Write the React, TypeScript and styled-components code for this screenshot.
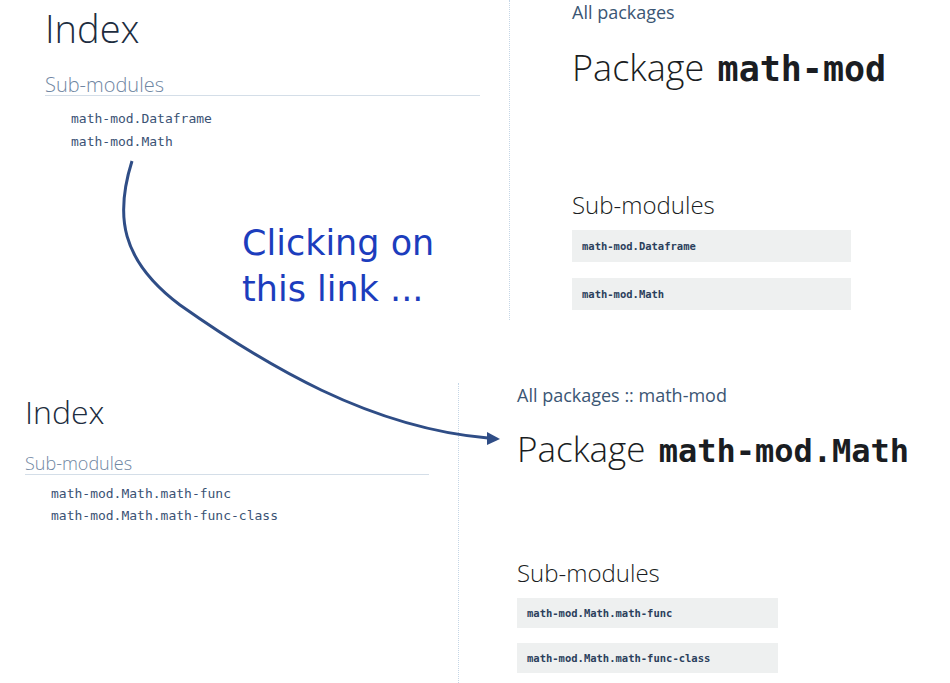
import styled, { createGlobalStyle } from "styled-components";

const GlobalStyle = createGlobalStyle`
  html, body {
    margin: 0;
    padding: 0;
    background: #ffffff;
  }
  body {
    font-family: "Open Sans", "Noto Sans", sans-serif;
  }
`;

const topShot = {
  sideWidth: 510,
  sidePad: 45,
  mainPad: 62,
  height: 320,
  subs: ["math-mod.Dataframe", "math-mod.Math"],
  crumbs: "All packages",
  pkg: "math-mod",
};

const bottomShot = {
  sideWidth: 459,
  sidePad: 25,
  mainPad: 58,
  height: 300,
  subs: ["math-mod.Math.math-func", "math-mod.Math.math-func-class"],
  crumbs: "All packages :: math-mod",
  pkg: "math-mod.Math",
};

const Page = styled.div`
  position: relative;
  width: 950px;
  height: 683px;
  overflow: hidden;
  background: #fff;
`;

const Shot = styled.div<{ $side: number; $h: number; $top: number }>`
  display: grid;
  grid-template-columns: ${(p) => p.$side}px 1fr;
  height: ${(p) => p.$h}px;
  margin-top: ${(p) => p.$top}px;
`;

const Sidebar = styled.nav<{ $pad: number; $small?: boolean }>`
  padding: ${(p) => (p.$small ? 10 : 6)}px 29px 0 ${(p) => p.$pad}px;
  border-right: 1px dotted #c5d6e6;
`;

const IndexTitle = styled.h1<{ $small?: boolean }>`
  margin: 0;
  font-weight: 300;
  font-size: ${(p) => (p.$small ? 32 : 38)}px;
  line-height: 1.2;
  color: #1d2d40;
`;

const SideHeading = styled.h2<{ $small?: boolean }>`
  margin: ${(p) => (p.$small ? 21 : 23)}px 0 0;
  font-weight: 300;
  font-size: ${(p) => (p.$small ? 18 : 20)}px;
  line-height: ${(p) => (p.$small ? 22 : 20)}px;
  color: #6f86a2;
  border-bottom: 1px solid #d4dee8;
  padding-bottom: 0;
`;

const SideList = styled.ul<{ $small?: boolean }>`
  list-style: none;
  margin: ${(p) => (p.$small ? 8 : 11)}px 0 0;
  padding: 0 0 0 26px;
`;

const SideLink = styled.li<{ $small?: boolean }>`
  font-family: "DejaVu Sans Mono", "Liberation Mono", monospace;
  font-size: 13px;
  line-height: ${(p) => (p.$small ? 22 : 23)}px;
  color: #3a5274;
`;

const Main = styled.main<{ $pad: number }>`
  padding-left: ${(p) => p.$pad}px;
`;

const Crumbs = styled.div`
  font-size: 18px;
  line-height: 24px;
  color: #3b5674;
`;

const PkgTitle = styled.h1<{ $small?: boolean }>`
  margin: ${(p) => (p.$small ? 20 : 22)}px 0 0;
  font-weight: 300;
  font-size: ${(p) => (p.$small ? 35 : 36)}px;
  line-height: 44px;
  color: #1a1d22;
  white-space: nowrap;
`;

const PkgName = styled.code<{ $small?: boolean }>`
  font-family: "DejaVu Sans Mono", "Liberation Mono", monospace;
  font-weight: 700;
  font-size: ${(p) => (p.$small ? 32 : 35)}px;
  margin-left: 4px;
`;

const MainHeading = styled.h2<{ $small?: boolean }>`
  margin: ${(p) => (p.$small ? 85 : 99)}px 0 0;
  font-weight: 300;
  font-size: 24px;
  line-height: 30px;
  color: #1a1d22;
`;

const ModList = styled.div<{ $small?: boolean }>`
  display: flex;
  flex-direction: column;
  gap: ${(p) => (p.$small ? 15 : 16)}px;
  margin-top: 10px;
`;

const ModBox = styled.div<{ $small?: boolean }>`
  width: ${(p) => (p.$small ? 261 : 279)}px;
  height: ${(p) => (p.$small ? 30 : 32)}px;
  background: #eef0f0;
  display: flex;
  align-items: center;
  padding-left: 10px;
  box-sizing: border-box;
  font-family: "DejaVu Sans Mono", "Liberation Mono", monospace;
  font-weight: 700;
  font-size: 10.5px;
  color: #2b3f5c;
`;

const Note = styled.div`
  position: absolute;
  left: 242px;
  top: 220px;
  font-family: "DejaVu Sans", sans-serif;
  font-size: 35px;
  line-height: 46px;
  color: #1c3dbd;
`;

const Arrow = styled.svg`
  position: absolute;
  left: 0;
  top: 0;
  pointer-events: none;
`;

type ShotData = typeof topShot;

const Screen = ({ d, top, small }: { d: ShotData; top: number; small?: boolean }) => (
  <Shot $side={d.sideWidth} $h={d.height} $top={top}>
    <Sidebar $pad={d.sidePad} $small={small}>
      <IndexTitle $small={small}>Index</IndexTitle>
      <SideHeading $small={small}>Sub-modules</SideHeading>
      <SideList $small={small}>
        {d.subs.map((s) => (
          <SideLink key={s} $small={small}>
            {s}
          </SideLink>
        ))}
      </SideList>
    </Sidebar>
    <Main $pad={d.mainPad}>
      <Crumbs>{d.crumbs}</Crumbs>
      <PkgTitle $small={small}>
        Package <PkgName $small={small}>{d.pkg}</PkgName>
      </PkgTitle>
      <MainHeading $small={small}>Sub-modules</MainHeading>
      <ModList $small={small}>
        {d.subs.map((s) => (
          <ModBox key={s} $small={small}>
            {s}
          </ModBox>
        ))}
      </ModList>
    </Main>
  </Shot>
);

export default function App() {
  return (
    <Page>
      <GlobalStyle />
      <Screen d={topShot} top={0} />
      <Screen d={bottomShot} top={63} small />
      <Note>
        Clicking on
        <br />
        this link ...
      </Note>
      <Arrow width="950" height="683" viewBox="0 0 950 683">
        <path
          d="M132 161 C 115 215, 120 260, 180 305 C 265 365, 370 428, 488 438"
          fill="none"
          stroke="#2f4d86"
          strokeWidth="3"
        />
        <path d="M487 432 L500 439 L487 445 Z" fill="#2f4d86" />
      </Arrow>
    </Page>
  );
}
